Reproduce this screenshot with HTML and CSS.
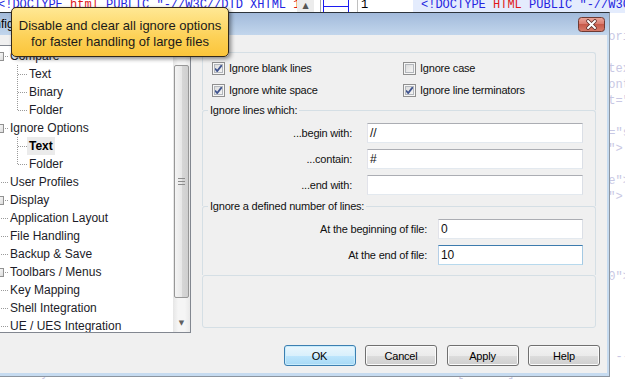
FILE: index.html
```html
<!DOCTYPE html>
<html lang="en">
<head>
    <meta charset="UTF-8">
    <meta name="viewport" content="width=device-width, initial-scale=1.0">
    <title>Configuration</title>
    <link rel="stylesheet" href="styles.css">
</head>
<body>
    <!-- editor behind the dialog -->
    <div class="editor">
        <div class="pane pane-left">
            <div class="line"><span class="tag">&lt;!DOCTYPE </span><span class="kw">html</span><span class="tag"> PUBLIC "-//W3C//DTD XHTML </span><span class="kw">1</span><span class="tag">.0 Transitional//EN"</span></div>
            <div class="line dim">&lt;html xmlns="http://www.w3.org/1999/xhtml"&gt;</div>
            <div class="line dim">&lt;head&gt;</div>
            <div class="line"></div><div class="line"></div><div class="line"></div>
            <div class="line"></div><div class="line"></div><div class="line"></div>
            <div class="line"></div><div class="line"></div><div class="line"></div>
            <div class="line"></div><div class="line"></div><div class="line"></div>
            <div class="line"></div><div class="line"></div><div class="line"></div>
            <div class="line"></div><div class="line"></div><div class="line"></div>
            <div class="line"></div><div class="line"></div>
            <div class="line dim"> &lt;/body&gt;</div>
        </div>
        <div class="vscroll"><span class="vscroll-btn">&#9650;</span></div>
        <div class="gutter">
            <svg class="fold" width="27" height="12" viewBox="0 0 27 12">
                <path d="M0.5 0v12M25.5 0v12M0.5 6.5h25" stroke="#1c1cf0" stroke-width="1" fill="none"/>
            </svg>
            <span class="lineno">1</span>
        </div>
        <div class="pane pane-right">
            <div class="line current"><span class="tag">&lt;!DOCTYPE </span><span class="kw">HTML</span><span class="tag"> PUBLIC "-//W3C//DTD HTML 4.01//EN"&gt;</span></div>
            <div class="line dim">&lt;html&gt;</div>
            <div class="line dim">&lt;!-- saved from url=(0014)original --&gt;</div>
            <div class="line dim">&lt;head&gt;</div>
            <div class="line dim">  &lt;title&gt;Compare Sample - text&lt;/title&gt;</div>
            <div class="line dim">  &lt;meta name="generator" content="UltraCompare"&gt;</div>
            <div class="line dim">  &lt;meta name="keywords"  nt="diff"&gt;</div>
            <div class="line"></div>
            <div class="line dim">  &lt;link rel="styleshee" nt="s.css"&gt;</div>
            <div class="line dim">  &lt;script type="text/jav h"&gt;</div>
            <div class="line dim red">  &lt;/head&gt;              UI</div>
            <div class="line dim">&lt;body class="main" bgcol ae"&gt;</div>
            <div class="line dim">  &lt;div id="wrapper" styl ="&gt;</div>
            <div class="line"></div><div class="line"></div><div class="line"></div><div class="line"></div>
            <div class="line dim">    &lt;p style="margin-le t:0"&gt;</div>
            <div class="line"></div><div class="line"></div><div class="line"></div><div class="line"></div>
            <div class="line dim">  &lt;/div&gt;  &lt;!-- [footer] ae --&gt;</div>
            <div class="line dim">&lt;!-- [footer] --&gt;</div>
        </div>
    </div>

    <!-- the configuration dialog -->
    <div class="dialog">
        <div class="titlebar">
            <span class="title">Configuration</span>
            <span class="close">
                <svg width="27" height="15" viewBox="0 0 27 15">
                    <defs>
                        <linearGradient id="cg" x1="0" y1="0" x2="0" y2="1">
                            <stop offset="0" stop-color="#eaa89c"/>
                            <stop offset="0.5" stop-color="#d8776a"/>
                            <stop offset="0.5" stop-color="#c75a4a"/>
                            <stop offset="1" stop-color="#d77d6c"/>
                        </linearGradient>
                    </defs>
                    <rect x="0.5" y="0.5" width="26" height="14" rx="3" fill="url(#cg)" stroke="#6e3a33"/>
                    <path d="M10 4l7 7M17 4l-7 7" stroke="#5a2e2a" stroke-width="3.6" stroke-linecap="round"/>
                    <path d="M10 4l7 7M17 4l-7 7" stroke="#fff" stroke-width="2" stroke-linecap="round"/>
                </svg>
            </span>
        </div>
        <div class="dialog-body">
            <div class="panels">
                <div class="tree">
                    <div class="tree-list">
                        <div class="node top"><span class="twig"><span class="expander"></span></span><span class="label">Compare</span></div>
                        <div class="node child"><span class="twig"></span><span class="label">Text</span></div>
                        <div class="node child"><span class="twig"></span><span class="label">Binary</span></div>
                        <div class="node child last"><span class="twig"></span><span class="label">Folder</span></div>
                        <div class="node top"><span class="twig"><span class="expander"></span></span><span class="label">Ignore Options</span></div>
                        <div class="node child sel"><span class="twig"></span><span class="label">Text</span></div>
                        <div class="node child last"><span class="twig"></span><span class="label">Folder</span></div>
                        <div class="node top"><span class="twig"></span><span class="label">User Profiles</span></div>
                        <div class="node top"><span class="twig"><span class="expander"></span></span><span class="label">Display</span></div>
                        <div class="node top"><span class="twig"></span><span class="label">Application Layout</span></div>
                        <div class="node top"><span class="twig"></span><span class="label">File Handling</span></div>
                        <div class="node top"><span class="twig"></span><span class="label">Backup &amp; Save</span></div>
                        <div class="node top"><span class="twig"><span class="expander"></span></span><span class="label">Toolbars / Menus</span></div>
                        <div class="node top"><span class="twig"></span><span class="label">Key Mapping</span></div>
                        <div class="node top"><span class="twig"></span><span class="label">Shell Integration</span></div>
                        <div class="node top"><span class="twig"></span><span class="label">UE / UES Integration</span></div>
                    </div>
                    <div class="tree-scroll">
                        <div class="sb-btn">&#9650;</div>
                        <div class="sb-track">
                            <div class="sb-thumb"><span class="grip"></span></div>
                        </div>
                        <div class="sb-btn">&#9660;</div>
                    </div>
                </div>

                <div class="options">
                    <div class="group checks">
                        <label class="check"><span class="cb on"></span>Ignore blank lines</label>
                        <label class="check"><span class="cb"></span>Ignore case</label>
                        <label class="check"><span class="cb on"></span>Ignore white space</label>
                        <label class="check"><span class="cb on"></span>Ignore line terminators</label>
                    </div>
                    <div class="group">
                        <span class="legend">Ignore lines which:</span>
                        <div class="fields fields-lines">
                            <span class="field-label">...begin with:</span>
                            <span class="input">//</span>
                            <span class="field-label">...contain:</span>
                            <span class="input">#</span>
                            <span class="field-label">...end with:</span>
                            <span class="input"></span>
                        </div>
                    </div>
                    <div class="group">
                        <span class="legend">Ignore a defined number of lines:</span>
                        <div class="fields fields-count">
                            <span class="field-label">At the beginning of file:</span>
                            <span class="input">0</span>
                            <span class="field-label">At the end of file:</span>
                            <span class="input focus">10</span>
                        </div>
                    </div>
                    <div class="group empty"></div>
                </div>
            </div>

            <div class="buttons">
                <button type="button" class="btn default">OK</button>
                <button type="button" class="btn">Cancel</button>
                <button type="button" class="btn">Apply</button>
                <button type="button" class="btn">Help</button>
            </div>
        </div>
    </div>

    <div class="tip">Disable and clear all ignore options<br>for faster handling of large files</div>
</body>
</html>
```

FILE: styles.css
```css
html, body {
    overflow: hidden;
}
body {
    margin: 0;
    width: 625px;
    height: 388px;
    position: relative;
    background: #fff;
    font-family: "Liberation Sans", Arial, sans-serif;
}

/* editor in the background */
.editor {
    display: flex;
    align-items: flex-start;
    height: 388px;
    margin-top: -3px;
    overflow: hidden;
    font: 12px/16px "Liberation Mono", "Courier New", monospace;
}
.pane {
    overflow: hidden;
}
.pane-left {
    width: 297px;
    flex: none;
}
.pane-left .line {
    margin-left: -2px;
}
.line {
    height: 16px;
    white-space: pre;
}
.tag {
    color: #2424e0;
}
.kw {
    color: #e01818;
}
.dim {
    color: #c8c8e4;
}
.dim.red {
    color: #ecc6cc;
}
.vscroll {
    width: 24px;
    height: 15px;
    flex: none;
    border-right: 1px solid #a8a8a8;
    box-sizing: border-box;
}
.vscroll-btn {
    display: block;
    width: 17px;
    height: 15px;
    background: #ececec;
    color: #555;
    font: 8px/18px "DejaVu Sans", sans-serif;
    text-align: center;
}
.gutter {
    width: 92px;
    flex: none;
    display: flex;
    align-items: flex-start;
}
.fold {
    margin: 3px 0 0 2px;
}
.lineno {
    margin-left: 7px;
    padding-left: 3px;
    border-left: 1px solid #c0c0c0;
}
.pane-right {
    flex: 1;
}
.pane-right .line {
    padding-left: 8px;
}
.pane-right .current {
    background: #e4ecfd;
}

/* dialog window */
.dialog {
    position: absolute;
    left: -44px;
    top: 12px;
    width: 654px;
    height: 365px;
    box-sizing: border-box;
    border: 1px solid #8c95a0;
    border-top-color: #2c333b;
    background: #c6dbf0;
    display: flex;
    flex-direction: column;
}
.titlebar {
    height: 22px;
    flex: none;
    display: flex;
    align-items: center;
    justify-content: space-between;
    padding: 0 4px 0 22px;
    background: linear-gradient(#a2badb, #c2d6ec);
    font-size: 12px;
    color: #000;
}
.close svg {
    display: block;
}
.dialog-body {
    flex: 1;
    margin: 0 2px 3px 2px;
    background: #f0f0f0;
    padding: 10px 11px 0 31px;
    font-size: 11px;
    letter-spacing: -0.2px;
    color: #111;
}
.panels {
    display: flex;
    gap: 11px;
    align-items: flex-start;
}

/* tree */
.tree {
    width: 201px;
    height: 288px;
    flex: none;
    box-sizing: border-box;
    border: 1px solid #828790;
    background: #fff;
    display: flex;
    overflow: hidden;
    letter-spacing: 0;
}
.tree-list {
    flex: 1;
    padding-top: 1px;
}
.node {
    display: flex;
    height: 18px;
    align-items: center;
}
.twig {
    flex: none;
    height: 18px;
    display: flex;
    align-items: center;
}
.top > .twig {
    width: 17px;
    background: repeating-linear-gradient(to right, #9a9a9a 0 1px, transparent 1px 2px) 8px 9px / 9px 1px no-repeat;
}
.child > .twig {
    width: 36px;
    background:
        repeating-linear-gradient(to right, #9a9a9a 0 1px, transparent 1px 2px) 27px 9px / 9px 1px no-repeat,
        repeating-linear-gradient(#9a9a9a 0 1px, transparent 1px 2px) 26px 0 / 1px 18px no-repeat;
}
.child.last > .twig {
    background-size: 9px 1px, 1px 10px;
}
.expander {
    width: 9px;
    height: 9px;
    box-sizing: border-box;
    margin-left: 4px;
    border: 1px solid #919191;
    background: linear-gradient(135deg, #fff, #dcdcdc);
}
.label {
    padding: 0 2px;
    line-height: 18px;
    font-size: 12px;
    color: #1c1c28;
    white-space: nowrap;
}
.sel .label {
    background: #ebebeb;
    font-weight: bold;
    color: #000;
}
.tree-scroll {
    width: 17px;
    flex: none;
    display: flex;
    flex-direction: column;
    background: linear-gradient(to right, #e6e6e6, #f5f5f5 30%, #f5f5f5 70%, #e9e9e9);
}
.sb-btn {
    height: 17px;
    flex: none;
    text-align: center;
    font: 7px/17px "DejaVu Sans", sans-serif;
    color: #606060;
}
.sb-track {
    flex: 1;
}
.sb-thumb {
    margin: 2px 1px 0 1px;
    height: 233px;
    box-sizing: border-box;
    border: 1px solid #979797;
    border-radius: 2px;
    background: linear-gradient(to right, #f4f4f4, #e8e8e8 50%, #d7d7d7 51%, #cfcfcf);
    display: flex;
    align-items: center;
    justify-content: center;
}
.grip {
    width: 7px;
    height: 5px;
    border-top: 1px solid #8c8c8c;
    border-bottom: 1px solid #8c8c8c;
    background: linear-gradient(#8c8c8c, #8c8c8c) 0 2px / 7px 1px no-repeat;
}

/* option groups */
.options {
    flex: 1;
    margin-top: 7px;
}
.group {
    border: 1px solid #d5dfe5;
    border-bottom: none;
    border-radius: 3px 3px 0 0;
    padding: 0 12px 0 0;
}
.group:last-child {
    border-bottom: 1px solid #d5dfe5;
    border-radius: 3px;
}
.checks {
    display: grid;
    grid-template-columns: 191px 1fr;
    row-gap: 9px;
    padding: 9px 0 13px 9px;
}
.check {
    display: flex;
    align-items: center;
    gap: 4px;
    line-height: 13px;
}
.cb {
    width: 13px;
    height: 13px;
    flex: none;
    box-sizing: border-box;
    border: 1px solid #8f8f8f;
    background: linear-gradient(135deg, #d6d6d6, #fbfbfb);
    box-shadow: inset 0 0 0 1px #f6f6f6, inset 0 0 0 2px #b3b7bc;
}
.cb.on {
    background:
        url("data:image/svg+xml,%3Csvg xmlns='http://www.w3.org/2000/svg' width='11' height='11'%3E%3Cpath d='M2 5.5l2.2 2.6 4.6-6' fill='none' stroke='%2341558f' stroke-width='1.8'/%3E%3C/svg%3E") center / 11px 11px no-repeat,
        linear-gradient(135deg, #d6d6d6, #fbfbfb);
}
.legend {
    display: block;
    width: max-content;
    margin: -7px 0 0 5px;
    padding: 0 2px;
    line-height: 13px;
    background: #f0f0f0;
}
.fields {
    display: grid;
    row-gap: 6px;
    align-items: center;
    margin-top: 6px;
}
.fields-lines {
    grid-template-columns: 149px 216px;
    column-gap: 15px;
    padding-bottom: 11px;
}
.fields-count {
    grid-template-columns: 224px 145px;
    column-gap: 11px;
    padding-bottom: 10px;
}
.field-label {
    text-align: right;
}
.input {
    height: 20px;
    box-sizing: border-box;
    border: 1px solid;
    border-color: #abadb3 #dbdfe6 #e3e9ef #e2e3ea;
    background: #fff;
    padding: 0 2px;
    line-height: 18px;
    font-size: 12px;
    color: #111;
}
.input.focus {
    border-color: #3d7bad #a4c9e3 #b7d9ed #b5cfe7;
}
.group.empty {
    height: 53px;
    box-sizing: border-box;
}

/* dialog buttons */
.buttons {
    display: flex;
    justify-content: flex-end;
    gap: 9.5px;
    margin: 12px -4px 0 0;
}
.btn {
    width: 72px;
    height: 21px;
    padding: 0;
    border: 1px solid #707070;
    border-radius: 3px;
    background: linear-gradient(#f2f2f2, #ebebeb 50%, #dddddd 50%, #cfcfcf);
    box-shadow: inset 0 0 0 1px #fbfbfb;
    font: 11px "Liberation Sans", Arial, sans-serif;
    letter-spacing: -0.2px;
    color: #000;
}
.btn.default {
    border-color: #3c7fb1;
    background: linear-gradient(#eaf6fd, #d9f0fc 50%, #bee6fd 50%, #a7d9f5);
    box-shadow: inset 0 0 0 1px #c8ecfc;
}

/* tooltip over everything */
.tip {
    position: absolute;
    left: 11px;
    top: 7px;
    width: 218px;
    height: 50px;
    box-sizing: border-box;
    border: 1px solid #33291a;
    border-radius: 5px;
    background: linear-gradient(#ffe894, #fdd157 60%, #fbc53a);
    box-shadow: 2px 2px 4px rgba(0, 0, 0, 0.45);
    padding-top: 10px;
    text-align: center;
    font: 13px/16px "Liberation Sans", Arial, sans-serif;
    color: #1a1a1a;
}
```
